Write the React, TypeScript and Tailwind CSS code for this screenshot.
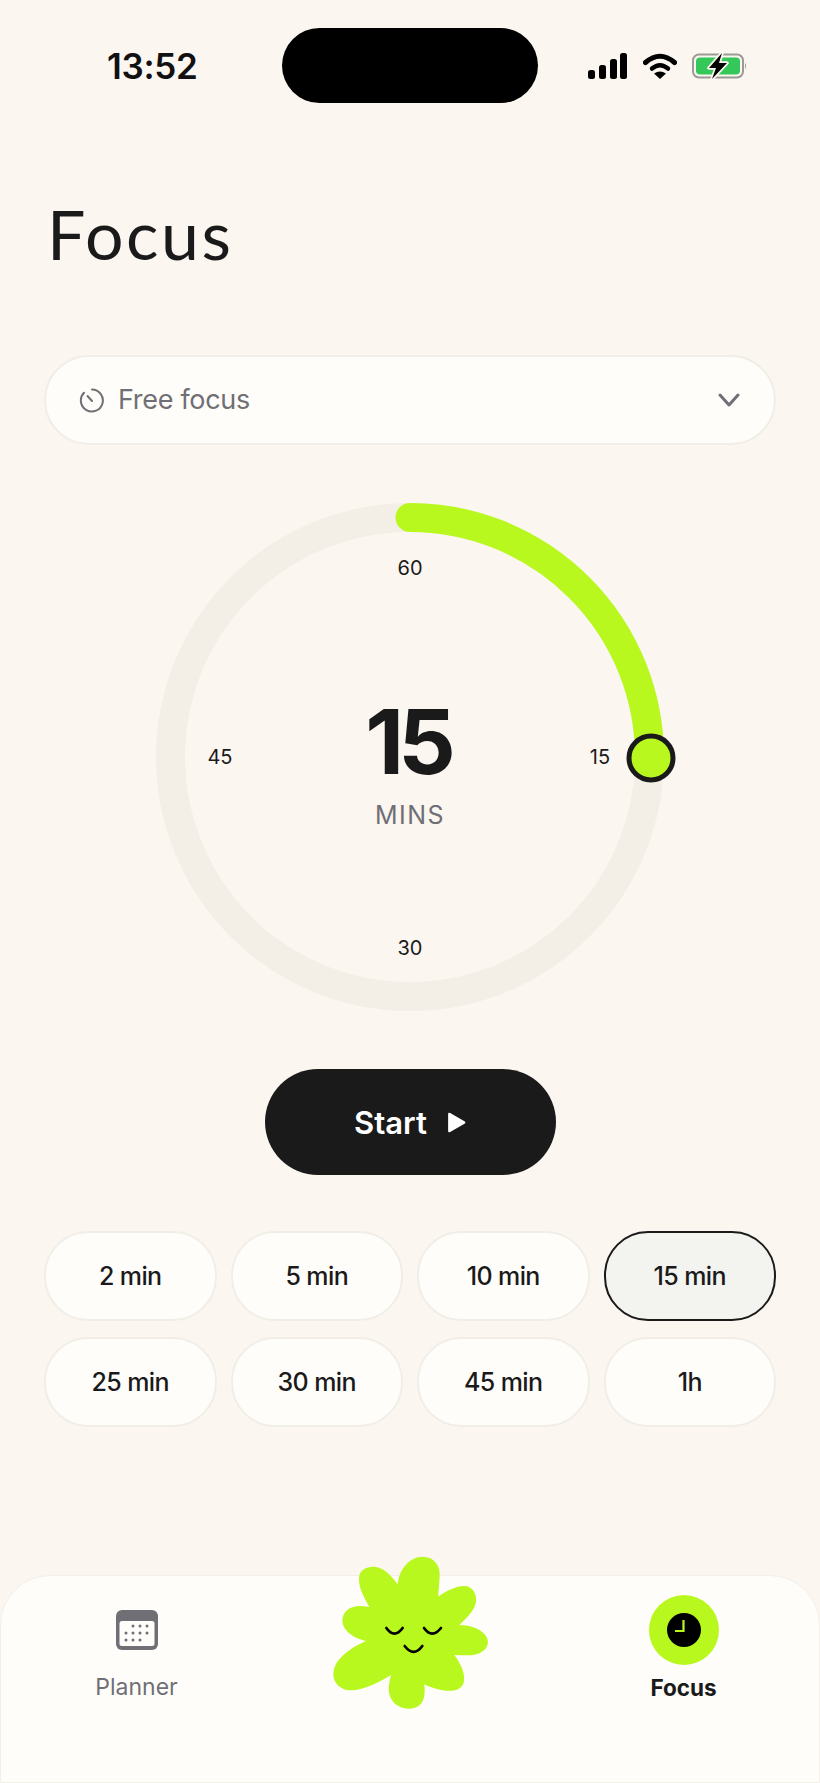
const row1 = ['2 min', '5 min', '10 min', '15 min'];
const row2 = ['25 min', '30 min', '45 min', '1h'];

function StatusIcons() {
  return (
    <div className="flex items-center gap-[16px]">
      <svg width="39" height="26" viewBox="0 0 39 26">
        <rect x="0" y="17" width="7" height="9" rx="2.5" fill="#000" />
        <rect x="11" y="12" width="7" height="14" rx="2.5" fill="#000" />
        <rect x="22" y="6" width="7" height="20" rx="2.5" fill="#000" />
        <rect x="32" y="0" width="7" height="26" rx="2.5" fill="#000" />
      </svg>
      <svg width="34" height="26" viewBox="0 0 34 26">
        <path d="M2.5 9.5 Q17 -3 31.5 9.5" fill="none" stroke="#000" strokeWidth="5" strokeLinecap="round" />
        <path d="M9 15.5 Q17 9 25 15.5" fill="none" stroke="#000" strokeWidth="4.5" strokeLinecap="round" />
        <path d="M11 20.5 Q17 16.5 23 20.5 L17 26 Z" fill="#000" />
      </svg>
      <svg width="55" height="26" viewBox="0 0 55 26" className="-ml-[1px]">
        <rect x="1" y="1.5" width="50" height="23" rx="6" fill="none" stroke="#9a9a96" strokeWidth="2" />
        <rect x="4" y="4.5" width="44" height="17" rx="4" fill="#34c759" />
        <path d="M53 9.5 Q55 13 53 16.5 Z" fill="#9a9a96" />
        <path d="M30 0 L17 15 H24 L20 26 L35 10 H27 Z" fill="#000" stroke="#fbf6f0" strokeWidth="3.5" strokeLinejoin="round" paintOrder="stroke" />
      </svg>
    </div>
  );
}

function Dial() {
  return (
    <div className="relative w-[508px] h-[508px]">
      <svg width="508" height="508" viewBox="0 0 508 508" className="absolute inset-0 overflow-visible">
        <circle cx="254" cy="254" r="239.5" fill="none" stroke="#f3efe6" strokeWidth="29" />
        <path d="M254 14.5 A239.5 239.5 0 0 1 493.5 254" fill="none" stroke="#b9f81e" strokeWidth="29" strokeLinecap="round" />
        <circle cx="495" cy="255" r="22" fill="#b9f81e" stroke="#1a1a1a" strokeWidth="5" />
      </svg>
      <span className="absolute left-[224px] top-[53px] w-[60px] text-center text-[20px] leading-[24px] text-[#1a1a1a]">60</span>
      <span className="absolute left-[414px] top-[242px] w-[60px] text-center text-[20px] leading-[24px] text-[#1a1a1a]">15</span>
      <span className="absolute left-[34px] top-[242px] w-[60px] text-center text-[20px] leading-[24px] text-[#1a1a1a]">45</span>
      <span className="absolute left-[224px] top-[433px] w-[60px] text-center text-[20px] leading-[24px] text-[#1a1a1a]">30</span>
      <div className="absolute inset-0 flex flex-col items-center pt-[189px]">
        <span className="-ml-[5px] text-[90px] leading-[100px] font-bold tracking-[-6px] text-[#1a1a1a]">15</span>
        <span className="mt-[8px] text-[25px] leading-[30px] tracking-[1.5px] text-[#6f6f75]">MINS</span>
      </div>
    </div>
  );
}

function Chip({ label }: { label: string }) {
  const active = label === '15 min';
  return (
    <div
      className={
        active
          ? 'h-[90px] pt-[2px] rounded-[44px] border-2 border-[#1a1a1a] bg-[#f3f3f0] flex items-center justify-center text-[25px] font-medium tracking-[-0.6px] text-[#1a1a1a]'
          : 'h-[90px] pt-[2px] rounded-[44px] border-2 border-[#f1eee8] bg-[#fffdfa] flex items-center justify-center text-[25px] font-medium tracking-[-0.6px] text-[#1a1a1a]'
      }
    >
      {label}
    </div>
  );
}

function Flower() {
  return (
    <svg width="220" height="200" viewBox="0 0 660 600" className="absolute left-[300px] top-[-45px]">
      <path
        d="M290 160 C295 110 330 77 365 77 C400 77 418 105 416 135 C415 160 412 180 412 197 C435 180 465 165 490 165 C515 165 528 190 525 212 C520 240 495 262 475 282 C510 282 545 295 558 320 C570 350 540 372 505 373 C490 373 475 373 460 372 C478 395 495 430 488 455 C480 480 450 482 425 478 C405 474 385 468 370 460 C372 480 372 505 360 518 C345 535 315 538 292 525 C265 510 260 480 265 455 C266 448 268 440 270 432 C240 450 190 478 150 478 C115 478 92 450 98 420 C105 380 150 350 195 330 C160 322 125 300 124 270 C124 240 150 225 175 225 C185 225 195 226 205 228 C190 200 172 170 174 140 C176 115 200 105 225 108 C250 112 272 135 290 160 Z"
        fill="#b9f81e"
      />
      <path d="M256 291 Q280 325 305 291" fill="none" stroke="#000" strokeWidth="8" strokeLinecap="round" />
      <path d="M369 291 Q393 325 420 291" fill="none" stroke="#000" strokeWidth="8" strokeLinecap="round" />
      <path d="M311 345 Q338 380 364 345" fill="none" stroke="#000" strokeWidth="8" strokeLinecap="round" />
    </svg>
  );
}

export default function App() {
  return (
    <div className="w-[820px] h-[1783px] flex flex-col bg-[#fbf6f0] font-['Inter',sans-serif] overflow-hidden">
      <div className="flex items-center h-[75px] mt-[28px]">
        <div className="w-[282px] pl-[107px] pt-[2px] text-[35px] font-semibold tracking-[-0.3px] text-[#111]">13:52</div>
        <div className="w-[256px] h-[75px] rounded-full bg-black" />
        <div className="pl-[50px]"><StatusIcons /></div>
      </div>

      <h1 className="mt-[91px] ml-[47px] h-[88px] text-[68px] leading-[79px] font-['Lato',sans-serif] font-normal tracking-[2.5px] text-[#1a1a1a]">Focus</h1>

      <div className="mt-[73px] mx-[44px] h-[90px] rounded-full border-2 border-[#f1eee8] bg-[#fffdfa] flex items-center pl-[33px] pr-[34px]">
        <svg width="26" height="26" viewBox="0 0 26 26" fill="none" stroke="#6f6f75" strokeWidth="2" strokeLinecap="round">
          <path d="M13 2.5 A11 11 0 1 1 5 5.8" />
          <path d="M13 14 L8.5 9" />
        </svg>
        <span className="ml-[13px] pt-[1px] text-[27px] tracking-[-0.3px] text-[#6f6f75]">Free focus</span>
        <svg width="22" height="14" viewBox="0 0 22 14" fill="none" stroke="#6f6f75" strokeWidth="3" strokeLinecap="round" strokeLinejoin="round" className="ml-auto">
          <path d="M2 2 L11 12 L20 2" />
        </svg>
      </div>

      <div className="mt-[58px] flex justify-center">
        <Dial />
      </div>

      <div className="mt-[58px] flex justify-center">
        <div className="w-[291px] h-[106px] rounded-full bg-[#1a1a1a] flex items-center justify-center gap-[20px]">
          <span className="pt-[3px] text-[31px] font-semibold text-white">Start</span>
          <svg width="19" height="21" viewBox="0 0 18 20"><path d="M1 2 Q1 0 3 1 L17 9 Q18 10 17 11 L3 19 Q1 20 1 18 Z" fill="#fff" /></svg>
        </div>
      </div>

      <div className="mt-[56px] mx-[44px] grid grid-cols-4 gap-x-[14px] gap-y-[16px]">
        {row1.concat(row2).map(l => <Chip key={l} label={l} />)}
      </div>

      <div className="relative mt-auto h-[208px] rounded-t-[50px] border border-[#f3efe9] bg-[#fffdfa]">
        <Flower />
        <div className="absolute left-[58px] top-[34px] w-[155px] flex flex-col items-center">
          <svg width="42" height="40" viewBox="0 0 42 40">
            <rect width="42" height="40" rx="6" fill="#6f6f75" />
            <rect x="3.5" y="11" width="35" height="25" rx="2.5" fill="#fffdfa" />
            {[[17, 16], [24, 16], [31, 16], [10, 23], [17, 23], [24, 23], [31, 23], [10, 30], [17, 30], [24, 30]].map(([x, y]) => (
              <circle key={`${x}-${y}`} cx={x} cy={y} r="1.5" fill="#6f6f75" />
            ))}
          </svg>
          <span className="mt-[22px] text-[23px] leading-[30px] text-[#6f6f75]">Planner</span>
        </div>
        <div className="absolute left-[605px] top-[19px] w-[155px] flex flex-col items-center">
          <div className="w-[70px] h-[70px] rounded-full bg-[#b9f81e] flex items-center justify-center">
            <svg width="34" height="34" viewBox="0 0 34 34">
              <circle cx="17" cy="17" r="17" fill="#000" />
              <path d="M16.5 7 V18 H8" fill="none" stroke="#b9f81e" strokeWidth="2.2" />
            </svg>
          </div>
          <span className="mt-[8px] text-[22.5px] leading-[30px] font-bold text-[#1a1a1a]">Focus</span>
        </div>
      </div>
    </div>
  );
}
